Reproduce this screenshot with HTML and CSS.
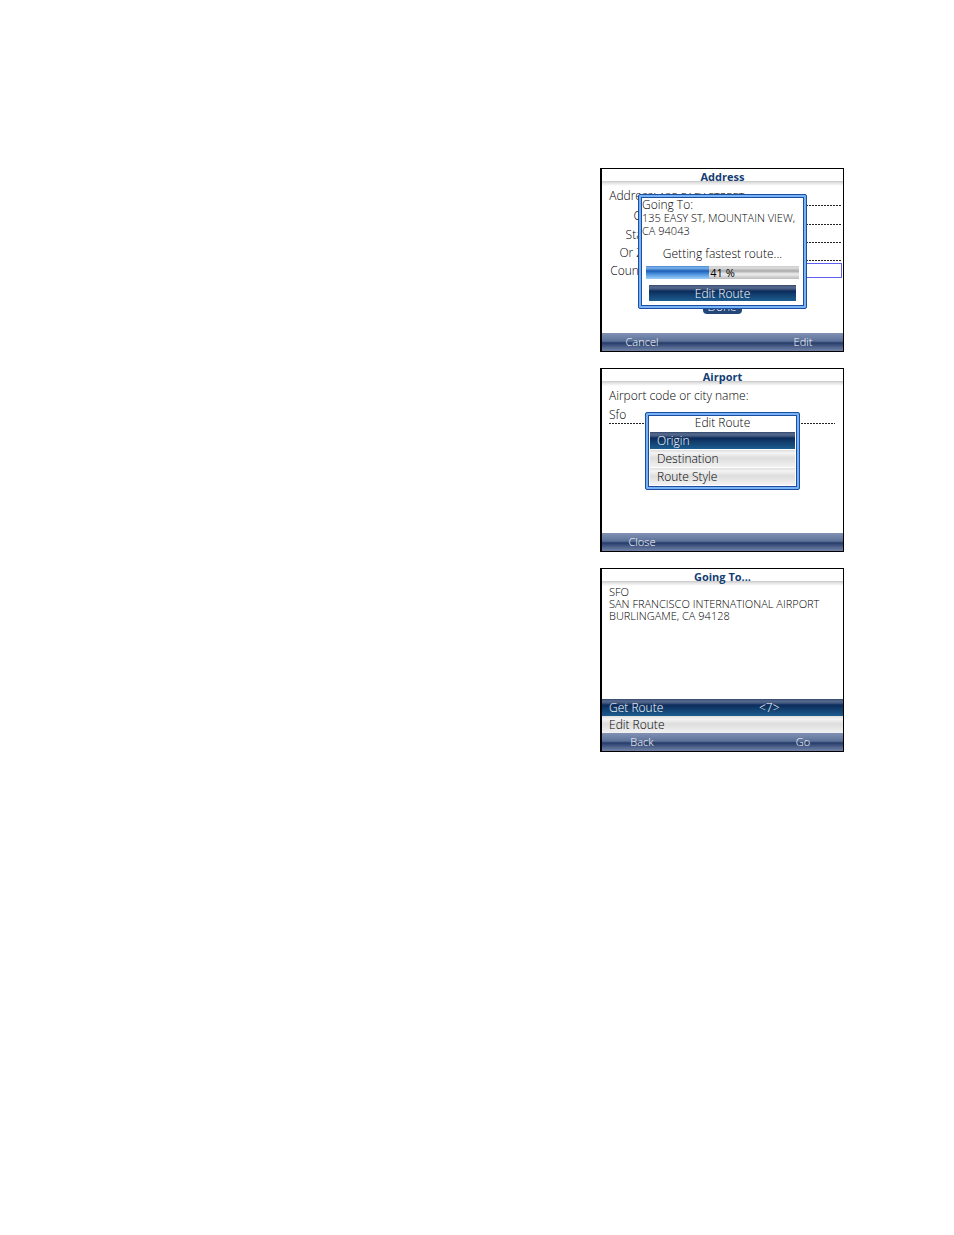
FILE: index.html
```html
<!DOCTYPE html>
<html lang="en">
<head>
<meta charset="utf-8">
<title>Navigator screens</title>
<link rel="stylesheet" href="styles.css">
</head>
<body>
<main class="page">
  <section class="screen">
    <h2 class="title">Address</h2>
    <form class="content address">
      <label for="street">Address:</label><input id="street" class="line caps" value="135 EASY STREET">
      <label for="city">City:</label><input id="city" class="line">
      <label for="state">State:</label><input id="state" class="line">
      <label for="zip">Or Zip:</label><input id="zip" class="line">
      <label for="country">Country:</label><input id="country" class="boxed">
      <button class="done" type="button">Done</button>
    </form>
    <div class="softkeys"><button>Cancel</button><button>Edit</button></div>
    <div class="dialog progress-dialog" role="dialog" aria-label="Route progress">
      <p>Going To:</p>
      <p class="caps">135 EASY ST, MOUNTAIN VIEW,<br>CA 94043</p>
      <p class="status">Getting fastest route...</p>
      <div class="progress" role="progressbar" aria-valuenow="41" aria-label="Route"><span class="fill" style="width:41%"></span><span class="percent">41 %</span></div>
      <button class="action">Edit Route</button>
    </div>
  </section>
  <section class="screen">
    <h2 class="title">Airport</h2>
    <form class="content airport">
      <label for="code">Airport code or city name:</label>
      <input id="code" class="line" value="Sfo">
    </form>
    <div class="softkeys"><button>Close</button></div>
    <div class="dialog menu-dialog" role="dialog" aria-label="Edit Route">
      <h3>Edit Route</h3>
      <button class="row selected">Origin</button>
      <button class="row">Destination</button>
      <button class="row">Route Style</button>
    </div>
  </section>
  <section class="screen">
    <h2 class="title">Going To...</h2>
    <p class="content destination caps">SFO<br>SAN FRANCISCO INTERNATIONAL AIRPORT<br>BURLINGAME, CA 94128</p>
    <div class="options">
      <button class="row selected"><span class="option-name">Get Route</span><span>&lt;7&gt;</span></button>
      <button class="row">Edit Route</button>
    </div>
    <div class="softkeys"><button>Back</button><button>Go</button></div>
  </section>
</main>
</body>
</html>
```
FILE: styles.css
```css
* { box-sizing: border-box; }
body { margin: 0; background: #fff; color: #000; font: 12px/13px "Open Sans", "Noto Sans", sans-serif; font-weight: 300; }
h2, h3, p { margin: 0; }
button, input { font: inherit; color: inherit; border: 0; padding: 0; margin: 0; background: none; border-radius: 0; }
input { outline: 0; min-width: 0; }
.page { display: flex; flex-direction: column; align-items: flex-end; gap: 16px; padding: 168px 110px 40px 20px; }
.screen { position: relative; display: flex; flex-direction: column; width: 100%; max-width: 244px; min-height: 184px; border: 1px solid #000; border-left-width: 2px; background: #fff; }
.title { height: 17px; padding-bottom: 2px; text-align: center; font-size: 11px; line-height: 15px; font-weight: 700; color: #123d73; background: linear-gradient(#fff 12px, #c8c8c8 12px, #e4e4e4 14px, #fff 17px); }
.caps { font-size: 11px; white-space: nowrap; }
.content { flex: 1; }
.address { display: grid; grid-template-columns: 54px 1fr; grid-template-rows: 20px 19px 18px 18px 17px 36px; column-gap: 3px; padding-right: 1px; }
.address label { text-align: right; line-height: 19px; }
.address input { width: 100%; }
.line { background: repeating-linear-gradient(90deg, #222 0 2px, #fff 2px 3px) bottom / 100% 1px no-repeat; }
.boxed { border: 1px solid #6060f0; margin-top: 2px; }
.done { grid-column: 1 / -1; justify-self: center; width: 39px; height: 16px; margin-top: 20px; border-radius: 4px; background: #234777; color: #fff; }
.softkeys { display: flex; justify-content: space-between; height: 18px; background: linear-gradient(#8191b5, #5d7299 45%, #263c69 55%, #52668f 80%, #7382a5); color: #fff; font-size: 11px; }
.softkeys button { width: 80px; line-height: 18px; }
.dialog { position: absolute; background: #fff; border: 1px solid #1c4d9f; box-shadow: inset 0 0 0 2px #78b4f5, inset 0 0 0 3px #1c4d9f; border-radius: 2px; display: flex; flex-direction: column; }
.dialog > * { flex-shrink: 0; }
.progress-dialog { left: 36px; right: 36px; top: 25px; min-height: 115px; padding: 3px; }
.status { text-align: center; margin-top: 10px; }
.progress { position: relative; height: 13px; margin: 6px 4px; background: linear-gradient(#ccc, #ddd 2px, #aaa 5px, #eee 8px, #bbb); }
.fill { position: absolute; left: 0; top: 0; bottom: 0; background: linear-gradient(#4a86cf, #7eb5ee 2px, #1d5eb5 5px, #4a91dc 8px, #a0cff8); }
.percent { position: absolute; left: 0; right: 0; text-align: center; font-size: 11px; font-weight: 400; }
.action { height: 16px; margin: 0 7px; }
.action, .selected { color: #fff; background: linear-gradient(#34486e, #566a8e 2px, #465b81 4px, #0b2b5b 6px, #123f6e 60%, #1d5c90); }
.menu-dialog { left: 43px; right: 43px; top: 43px; min-height: 78px; padding: 2px 4px 4px; gap: 1px; }
h3 { font-size: 12px; line-height: 16px; text-align: center; font-weight: inherit; }
.airport { display: flex; flex-direction: column; padding: 1px 8px 1px 7px; }
.airport label { line-height: 18px; }
.airport input { height: 19px; }
.row { text-align: left; height: 17px; padding: 0 7px; display: flex; align-items: center; width: 100%; }
.row:not(.selected) { background: linear-gradient(#ddd, #f4f4f4 3px, #ddd 8px, #f0f0f0 16px); }
.option-name { width: 150px; }
.destination { padding: 0 7px; line-height: 12px; }
```
